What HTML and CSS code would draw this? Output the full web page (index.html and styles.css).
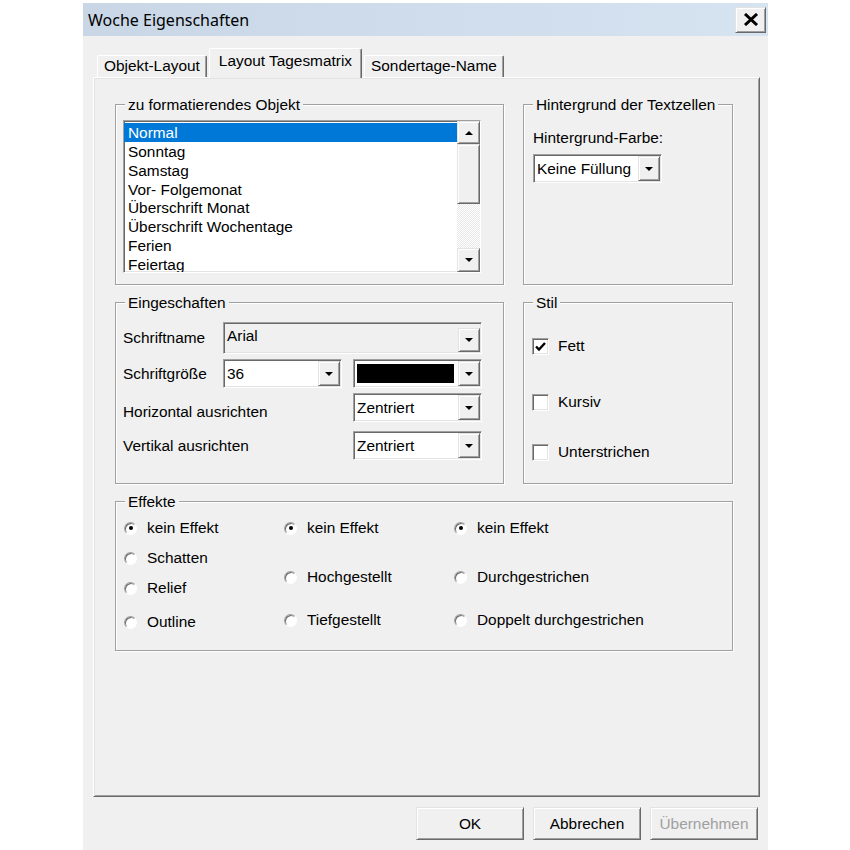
FILE: index.html
```html
<!DOCTYPE html>
<html lang="de">
<head>
    <meta charset="UTF-8">
    <title>Woche Eigenschaften</title>
    <link rel="stylesheet" href="styles.css">
</head>
<body>
    <div class="dialog">
        <div class="titlebar">
            <span class="title">Woche Eigenschaften</span>
            <div class="close raised">
                <svg width="16" height="13" viewBox="0 0 16 13"><path d="M2 1 L14 12 M14 1 L2 12" stroke="#000" stroke-width="3"/></svg>
            </div>
        </div>

        <div class="tabs">
            <div class="tab">Objekt-Layout</div>
            <div class="tab active">Layout Tagesmatrix</div>
            <div class="tab">Sondertage-Name</div>
        </div>

        <div class="panel">
            <!-- zu formatierendes Objekt -->
            <div class="group">
                <div class="group-title">zu formatierendes Objekt</div>
                <div class="listbox sunken">
                    <div class="list">
                        <div class="list-item selected">Normal</div>
                        <div class="list-item">Sonntag</div>
                        <div class="list-item">Samstag</div>
                        <div class="list-item">Vor- Folgemonat</div>
                        <div class="list-item">Überschrift Monat</div>
                        <div class="list-item">Überschrift Wochentage</div>
                        <div class="list-item">Ferien</div>
                        <div class="list-item">Feiertag</div>
                    </div>
                    <div class="scrollbar">
                        <div class="sb-btn raised"><span class="arrow-up"></span></div>
                        <div class="sb-thumb raised"></div>
                        <div class="sb-track"></div>
                        <div class="sb-btn down raised"><span class="arrow-down"></span></div>
                    </div>
                </div>
            </div>

            <!-- Hintergrund -->
            <div class="group">
                <div class="group-title">Hintergrund der Textzellen</div>
                <div class="bg-label">Hintergrund-Farbe:</div>
                <div class="combo sunken bg-combo">
                    <span class="combo-text">Keine Füllung</span>
                    <span class="combo-btn raised"><span class="arrow-down"></span></span>
                </div>
            </div>

            <!-- Eigenschaften -->
            <div class="group">
                <div class="group-title">Eingeschaften</div>
                <div class="props">
                    <div class="prop-row">
                        <span class="prop-label">Schriftname</span>
                        <div class="combo sunken gray name-combo">
                            <span class="combo-text top">Arial</span>
                            <span class="combo-btn raised"><span class="arrow-down"></span></span>
                        </div>
                    </div>
                    <div class="prop-row">
                        <span class="prop-label">Schriftgröße</span>
                        <div class="combo sunken size-combo">
                            <span class="combo-text">36</span>
                            <span class="combo-btn raised"><span class="arrow-down"></span></span>
                        </div>
                        <div class="combo sunken color-combo">
                            <span class="swatch"></span>
                            <span class="combo-btn raised"><span class="arrow-down"></span></span>
                        </div>
                    </div>
                    <div class="prop-row">
                        <span class="prop-label wide low">Horizontal ausrichten</span>
                        <div class="combo sunken align-combo">
                            <span class="combo-text">Zentriert</span>
                            <span class="combo-btn raised"><span class="arrow-down"></span></span>
                        </div>
                    </div>
                    <div class="prop-row last">
                        <span class="prop-label wide">Vertikal ausrichten</span>
                        <div class="combo sunken align-combo">
                            <span class="combo-text">Zentriert</span>
                            <span class="combo-btn raised"><span class="arrow-down"></span></span>
                        </div>
                    </div>
                </div>
            </div>

            <!-- Stil -->
            <div class="group">
                <div class="group-title">Stil</div>
                <div class="checks">
                    <div class="check-row">
                        <span class="checkbox sunken">
                            <svg width="13" height="13" viewBox="0 0 13 13"><path d="M2 6.5 L5 9.5 L11 3" fill="none" stroke="#000" stroke-width="2.4"/></svg>
                        </span>
                        <span>Fett</span>
                    </div>
                    <div class="check-row second">
                        <span class="checkbox sunken"></span>
                        <span>Kursiv</span>
                    </div>
                    <div class="check-row third">
                        <span class="checkbox sunken"></span>
                        <span>Unterstrichen</span>
                    </div>
                </div>
            </div>

            <!-- Effekte -->
            <div class="group effects-group">
                <div class="group-title">Effekte</div>
                <div class="effects">
                    <div class="radio-col col-a">
                        <div class="radio-row"><span class="radio on"></span>kein Effekt</div>
                        <div class="radio-row"><span class="radio"></span>Schatten</div>
                        <div class="radio-row"><span class="radio"></span>Relief</div>
                        <div class="radio-row"><span class="radio"></span>Outline</div>
                    </div>
                    <div class="radio-col col-b">
                        <div class="radio-row"><span class="radio on"></span>kein Effekt</div>
                        <div class="radio-row"><span class="radio"></span>Hochgestellt</div>
                        <div class="radio-row"><span class="radio"></span>Tiefgestellt</div>
                    </div>
                    <div class="radio-col col-b">
                        <div class="radio-row"><span class="radio on"></span>kein Effekt</div>
                        <div class="radio-row"><span class="radio"></span>Durchgestrichen</div>
                        <div class="radio-row"><span class="radio"></span>Doppelt durchgestrichen</div>
                    </div>
                </div>
            </div>
        </div>

        <div class="buttons">
            <div class="btn raised">OK</div>
            <div class="btn raised">Abbrechen</div>
            <div class="btn raised disabled">Übernehmen</div>
        </div>
    </div>
</body>
</html>
```

FILE: styles.css
```css
body {
    margin: 0;
    background: #fff;
    font-family: "Liberation Sans", Arial, sans-serif;
    font-size: 15.4px;
    color: #000;
}
.dialog {
    width: 685px;
    height: 847px;
    margin: 3px 0 0 83px;
    background: #f0f0f0;
    display: flex;
    flex-direction: column;
}

/* 3D borders */
.raised {
    box-sizing: border-box;
    background: #f0f0f0;
    border: 1px solid;
    border-color: #e3e3e3 #696969 #696969 #e3e3e3;
    box-shadow: inset 1px 1px #fff, inset -1px -1px #a0a0a0;
}
.sunken {
    box-sizing: border-box;
    background: #fff;
    border: 1px solid;
    border-color: #a0a0a0 #fff #fff #a0a0a0;
    box-shadow: inset 1px 1px #696969, inset -1px -1px #e3e3e3;
}

.titlebar {
    height: 33px;
    background: linear-gradient(to right, #c8d6e6, #d6e3f1);
    display: flex;
    align-items: center;
    justify-content: space-between;
    padding: 0 2px 0 5px;
}
.title {
    font-family: "Noto Sans", sans-serif;
    font-size: 16px;
}
.close {
    width: 31px;
    height: 26px;
    display: flex;
    align-items: center;
    justify-content: center;
}

.tabs {
    display: flex;
    align-items: flex-end;
    gap: 2px;
    height: 30px;
    margin: 12px 0 -1px 14px;
}
.tab {
    box-sizing: border-box;
    height: 23px;
    padding: 0 6px 2px;
    display: flex;
    align-items: center;
    border: 1px solid;
    border-bottom: none;
    border-color: #fff #696969 transparent #fff;
    box-shadow: inset -1px 0 #a0a0a0;
    border-radius: 2px 2px 0 0;
}
.tab.active {
    height: 30px;
    padding: 0 9px 5px;
    background: #f0f0f0;
    position: relative;
    z-index: 1;
}

.panel {
    box-sizing: border-box;
    width: 667px;
    height: 720px;
    margin-left: 10px;
    border: 1px solid;
    border-color: #fff #696969 #696969 #fff;
    box-shadow: inset 1px 1px #e3e3e3, inset -1px -1px #a0a0a0;
    padding: 26px 0 0 21px;
    display: grid;
    grid-template-columns: 389px 210px;
    grid-template-rows: 181px 182px 150px;
    gap: 17px 19px;
    align-content: start;
}

.group {
    box-sizing: border-box;
    border: 1px solid #a0a0a0;
    box-shadow: inset 1px 1px #fff, 1px 1px #fff;
}
.group-title {
    width: fit-content;
    margin: -9px 0 0 9px;
    padding: 0 3px;
    line-height: 17px;
    background: #f0f0f0;
}
.effects-group {
    grid-column: 1 / -1;
}

/* list box */
.listbox {
    display: flex;
    width: 358px;
    height: 153px;
    margin: 7px 0 0 7px;
}
.list {
    flex: 1;
    overflow: hidden;
    padding-top: 2px;
}
.list-item {
    height: 18.86px;
    line-height: 19.5px;
    padding-left: 4px;
    white-space: nowrap;
}
.list-item.selected {
    background: #0078d7;
    color: #fff;
}
.scrollbar {
    width: 23px;
    display: flex;
    flex-direction: column;
}
.sb-btn {
    height: 23px;
    display: flex;
    align-items: center;
    justify-content: center;
}
.sb-btn.down {
    height: 24px;
}
.sb-thumb {
    height: 60px;
}
.sb-track {
    flex: 1;
    background: repeating-conic-gradient(#fff 0 25%, #e8e8e8 0 50%) 0 0 / 2px 2px;
}
.arrow-up {
    border-left: 4px solid transparent;
    border-right: 4px solid transparent;
    border-bottom: 4px solid #000;
}
.arrow-down {
    border-left: 4px solid transparent;
    border-right: 4px solid transparent;
    border-top: 4px solid #000;
}

/* combo boxes */
.combo {
    display: flex;
    height: 29px;
}
.combo.gray {
    background: #f0f0f0;
}
.combo-text {
    flex: 1;
    display: flex;
    align-items: center;
    padding-left: 3px;
}
.combo-text.top {
    align-items: flex-start;
    padding-top: 4px;
}
.combo-btn {
    width: 22px;
    display: flex;
    align-items: center;
    justify-content: center;
    margin: 1px 1px 1px 0;
}
.name-combo {
    width: 259px;
    height: 32px;
}
.name-combo .combo-btn {
    margin-top: 5px;
}
.size-combo {
    width: 119px;
}
.color-combo {
    width: 129px;
    margin-left: 11px;
}
.swatch {
    flex: 1;
    margin: 4px 4px 4px 3px;
    background: #000;
}
.align-combo {
    width: 129px;
}
.bg-label {
    margin: 16px 0 0 9px;
    line-height: 17px;
}
.bg-combo {
    width: 129px;
    margin: 8px 0 0 9px;
}

.props {
    display: flex;
    flex-direction: column;
    gap: 5px;
    margin: 11px 0 0 7px;
}
.prop-row {
    display: flex;
    align-items: center;
}
.prop-row.last {
    margin-top: 4px;
}
.prop-label {
    width: 100px;
}
.prop-label.wide {
    width: 230px;
}
.prop-label.low {
    padding-top: 9px;
}

/* check boxes */
.checks {
    display: flex;
    flex-direction: column;
    margin: 26px 0 0 8px;
}
.check-row {
    display: flex;
    align-items: center;
    gap: 9px;
    height: 18px;
}
.check-row.second {
    margin-top: 38px;
}
.check-row.third {
    margin-top: 32px;
}
.checkbox {
    width: 17px;
    height: 17px;
    display: flex;
    align-items: center;
    justify-content: center;
}

/* radio buttons */
.effects {
    display: grid;
    grid-template-columns: 160px 170px 1fr;
    margin: 8px 0 0 8px;
}
.radio-col {
    display: flex;
    flex-direction: column;
}
.col-a {
    gap: 10px;
}
.col-a .radio-row:last-child {
    margin-top: 4px;
}
.col-b {
    gap: 23px;
}
.col-b .radio-row:nth-child(2) {
    margin-top: 6px;
}
.radio-row {
    height: 20px;
    display: flex;
    align-items: center;
    gap: 10px;
    white-space: nowrap;
}
.radio {
    box-sizing: border-box;
    width: 13px;
    height: 13px;
    border-radius: 50%;
    border: 1px solid;
    border-color: #a0a0a0 #fff #fff #a0a0a0;
    background: #fff;
    box-shadow: inset 1px 1px #696969;
    display: flex;
    align-items: center;
    justify-content: center;
}
.radio.on::after {
    content: "";
    width: 4px;
    height: 4px;
    border-radius: 50%;
    background: #000;
}

.buttons {
    display: flex;
    justify-content: flex-end;
    gap: 9px;
    margin-top: 10px;
    padding-right: 10px;
}
.btn {
    width: 108px;
    height: 33px;
    display: flex;
    align-items: center;
    justify-content: center;
}
.btn.disabled {
    color: #a0a0a0;
}
```
